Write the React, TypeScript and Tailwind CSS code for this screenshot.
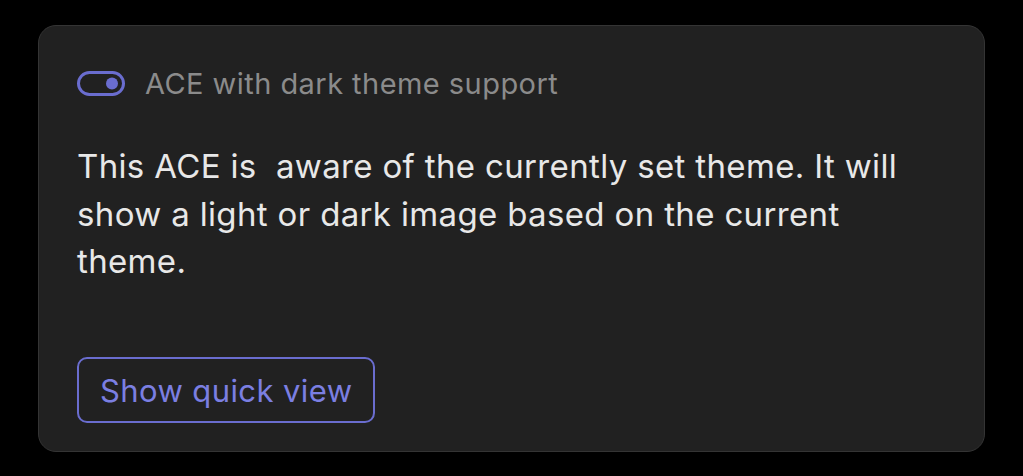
export default function App() {
  return (
    <div className="w-[1023px] h-[476px] bg-black pt-[25px] pl-[38px] font-['Inter',sans-serif]">
      <div className="w-[947px] h-[427px] rounded-[18px] border border-[#343434] bg-[#212121] flex flex-col px-[38px] pt-[34px] pb-[28px]">
        {/* header */}
        <div className="flex items-center gap-[20px] h-[46px]">
          <svg width="48" height="25" viewBox="0 0 48 25" fill="none">
            <rect x="1.5" y="1.5" width="45" height="22" rx="11" stroke="#6a6dcf" strokeWidth="3" />
            <circle cx="35" cy="12.5" r="6" fill="#6a6dcf" />
          </svg>
          <span className="text-[29px] tracking-[0.45px] text-[#8b8b8b] leading-none">ACE with dark theme support</span>
        </div>

        <p className="mt-[37px] text-[33px] tracking-[0.35px] leading-[47.5px] text-[#e8e8e8] w-[860px] whitespace-pre-wrap">
          {"This ACE is  aware of the currently set theme. It will show a light or dark image based on the current theme."}
        </p>

        <div className="mt-auto">
          <button className="h-[66px] px-[21px] rounded-[10px] border-2 border-[#6a6dcf] text-[#7b7fe2] text-[31px] tracking-[0.4px] leading-none">
            Show quick view
          </button>
        </div>
      </div>
    </div>
  );
}
